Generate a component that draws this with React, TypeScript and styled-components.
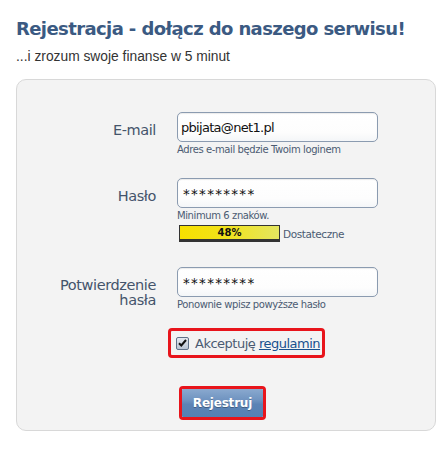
import React from "react";
import styled, { createGlobalStyle } from "styled-components";

const Global = createGlobalStyle`
  html, body { margin: 0; padding: 0; background: #fff; }
  body { font-family: "DejaVu Sans", Verdana, sans-serif; }
`;

const Page = styled.div`
  padding: 18px 9px 0 16px;
  width: 420px;
`;

const Title = styled.h1`
  margin: 0;
  font-family: "DejaVu Sans", Verdana, sans-serif;
  font-weight: bold;
  font-size: 18px;
  letter-spacing: -0.6px;
  color: #3b5a82;
  line-height: 22px;
`;

const Subtitle = styled.p`
  margin: 9px 0 0;
  font-family: "Liberation Sans", Arial, sans-serif;
  font-size: 13.8px;
  color: #333;
  line-height: 16px;
`;

const Panel = styled.form`
  margin-top: 14px;
  box-sizing: border-box;
  width: 420px;
  height: 352px;
  background: #f3f3f3;
  border: 1px solid #d8d8d8;
  border-radius: 10px;
  padding: 32px 0 0 0;
  display: flex;
  flex-direction: column;
`;

const Row = styled.div<{ $gap: number }>`
  display: grid;
  grid-template-columns: 139px 201px;
  column-gap: 21px;
  margin-bottom: ${(p) => p.$gap}px;
`;

const Label = styled.label`
  text-align: right;
  font-family: "DejaVu Sans", Verdana, sans-serif;
  font-size: 14.5px;
  letter-spacing: -0.4px;
  line-height: 15px;
  color: #44546b;
  padding-top: 11px;
`;

const Field = styled.div`
  display: flex;
  flex-direction: column;
`;

const Input = styled.input<{ $secret?: boolean }>`
  box-sizing: border-box;
  width: 201px;
  height: 30px;
  border: 1px solid #8b9bb0;
  border-radius: 5px;
  background: linear-gradient(#fff, #fdfdfd 70%, #f4f6f8);
  box-shadow: inset 0 1px 1px rgba(0, 0, 0, 0.08);
  padding: ${(p) => (p.$secret ? "2px 4px 0 5px" : "0 4px 0 3px")};
  font-family: "DejaVu Sans", Verdana, sans-serif;
  font-size: ${(p) => (p.$secret ? "13.5px" : "13px")};
  letter-spacing: ${(p) => (p.$secret ? "1.3px" : "-0.7px")};
  color: #111;
  outline: none;
`;

const Hint = styled.div`
  font-family: "DejaVu Sans", Verdana, sans-serif;
  font-size: 10px;
  letter-spacing: -0.4px;
  color: #4b5b72;
  line-height: 12px;
  margin-top: 2px;
`;

const StrengthRow = styled.div`
  display: flex;
  align-items: center;
  margin-top: 3px;
  margin-left: 2px;
`;

const Bar = styled.div`
  box-sizing: border-box;
  width: 101px;
  height: 17px;
  border: 1px solid #333;
  border-bottom-width: 3px;
  background: linear-gradient(90deg, #f7e000 0%, #f2e21a 45%, #e4e660 100%);
  display: flex;
  align-items: center;
  justify-content: center;
  font-family: "DejaVu Sans", Verdana, sans-serif;
  font-weight: bold;
  font-size: 10px;
  color: #111;
`;

const StrengthText = styled.span`
  margin-left: 3px;
  font-family: "DejaVu Sans", Verdana, sans-serif;
  font-size: 10.5px;
  letter-spacing: -0.4px;
  color: #4b5b72;
`;

const Line = styled.div<{ $mt: number; $pl: number }>`
  display: flex;
  margin-top: ${(p) => p.$mt}px;
  padding-left: ${(p) => p.$pl}px;
`;

const Outline = styled.div`
  box-sizing: border-box;
  border: 3px solid #e8141b;
  border-radius: 4px;
`;

const CheckWrap = styled(Outline)`
  width: 157px;
  height: 30px;
  display: flex;
  align-items: center;
  padding-left: 5px;
`;

const Box = styled.span`
  box-sizing: border-box;
  width: 13px;
  height: 13px;
  border: 1px solid #5f7189;
  border-radius: 2px;
  background: linear-gradient(#e4e9f0, #b9c4d3);
  display: flex;
  align-items: center;
  justify-content: center;
`;

const CheckText = styled.span`
  margin-left: 6px;
  font-family: "DejaVu Sans", Verdana, sans-serif;
  font-size: 13px;
  letter-spacing: -0.5px;
  color: #4b5b72;
`;

const Link = styled.a`
  color: #17508f;
  text-decoration: underline;
`;

const BtnWrap = styled(Outline)`
  width: 87px;
  height: 34px;
`;

const Button = styled.button`
  width: 100%;
  height: 100%;
  border: none;
  border-radius: 1px;
  background: linear-gradient(#8aa9cf 0%, #6f93c0 40%, #5c83b5 55%, #5580b3 100%);
  color: #fff;
  font-family: "DejaVu Sans", Verdana, sans-serif;
  font-weight: bold;
  font-size: 12px;
  letter-spacing: -0.2px;
  text-shadow: 0 1px 0 rgba(0, 0, 0, 0.3);
  padding: 0;
`;

export default function App() {
  return (
    <Page>
      <Global />
      <Title>Rejestracja - dołącz do naszego serwisu!</Title>
      <Subtitle>...i zrozum swoje finanse w 5 minut</Subtitle>
      <Panel onSubmit={(e) => e.preventDefault()}>
        <Row $gap={22}>
          <Label>E-mail</Label>
          <Field>
            <Input defaultValue="pbijata@net1.pl" />
            <Hint>Adres e-mail będzie Twoim loginem</Hint>
          </Field>
        </Row>
        <Row $gap={25}>
          <Label>Hasło</Label>
          <Field>
            <Input $secret type="text" defaultValue="*********" />
            <Hint>Minimum 6 znaków.</Hint>
            <StrengthRow>
              <Bar>48%</Bar>
              <StrengthText>Dostateczne</StrengthText>
            </StrengthRow>
          </Field>
        </Row>
        <Row $gap={0}>
          <Label>
            Potwierdzenie
            <br />
            hasła
          </Label>
          <Field>
            <Input $secret type="text" defaultValue="*********" />
            <Hint>Ponownie wpisz powyższe hasło</Hint>
          </Field>
        </Row>
        <Line $mt={17} $pl={151}>
          <CheckWrap>
            <Box>
              <svg width="9" height="8" viewBox="0 0 9 8">
                <path d="M1 4.2 L3.3 6.5 L8 1" fill="none" stroke="#111" strokeWidth="2" />
              </svg>
            </Box>
            <CheckText>
              Akceptuję <Link href="#">regulamin</Link>
            </CheckText>
          </CheckWrap>
        </Line>
        <Line $mt={28} $pl={162}>
          <BtnWrap>
            <Button type="submit">Rejestruj</Button>
          </BtnWrap>
        </Line>
      </Panel>
    </Page>
  );
}
